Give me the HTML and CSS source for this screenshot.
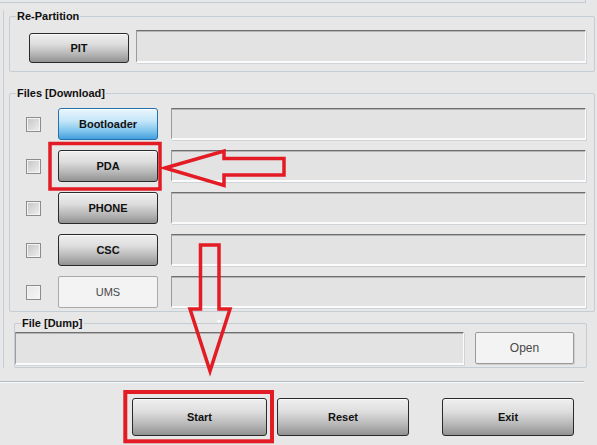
FILE: index.html
```html
<!DOCTYPE html>
<html>
<head>
<meta charset="utf-8">
<link rel="stylesheet" href="styles.css">
</head>
<body>
<div class="prev"></div>
<div class="panel">
  <fieldset class="group">
    <legend>Re-Partition</legend>
    <div class="rp-row">
      <button class="btn dark">PIT</button>
      <div class="field"></div>
    </div>
  </fieldset>
  <fieldset class="group files">
    <legend>Files [Download]</legend>
    <div class="rows">
      <div class="row"><span class="check"></span><button class="btn blue">Bootloader</button><div class="field"></div></div>
      <div class="row"><span class="check"></span><button class="btn dark">PDA</button><div class="field"></div></div>
      <div class="row"><span class="check"></span><button class="btn dark">PHONE</button><div class="field"></div></div>
      <div class="row"><span class="check"></span><button class="btn dark">CSC</button><div class="field"></div></div>
      <div class="row"><span class="check light"></span><button class="btn flat">UMS</button><div class="field"></div></div>
    </div>
  </fieldset>
  <fieldset class="group dump">
    <legend>File [Dump]</legend>
    <div class="dump-row">
      <div class="field"></div>
      <button class="btn flat open">Open</button>
    </div>
  </fieldset>
</div>
<div class="sep"></div>
<div class="actions">
  <button class="btn dark big">Start</button>
  <button class="btn dark big">Reset</button>
  <button class="btn dark big exit">Exit</button>
</div>
<svg class="marks" width="597" height="445" viewBox="0 0 597 445">
  <g fill="none" stroke="#e31b25" stroke-linejoin="miter">
    <rect x="50" y="143.5" width="110" height="45.5" stroke-width="3.5"/>
    <rect x="125.3" y="392" width="146.7" height="49.3" stroke-width="4"/>
    <polygon points="165,168 224,151 224,158.5 284,158.5 284,175 224,175 224,185.5" stroke-width="3.5"/>
    <polygon points="200.5,245 219,245 219,309 230,309 210,371 190,309 200.5,309" stroke-width="3.5"/>
  </g>
  <circle cx="219" cy="321" r="1.6" fill="#ffffff"/>
</svg>
</body>
</html>
```
FILE: styles.css
```css
html, body {
  margin: 0;
  padding: 0;
}
body {
  width: 597px;
  height: 445px;
  overflow: hidden;
  background: #e7e7e7;
  font-family: "Liberation Sans", Arial, sans-serif;
  font-size: 11px;
  color: #111;
  position: relative;
}
.prev {
  width: 585px;
  height: 2px;
  border-bottom: 1px solid #c3ccd4;
  border-right: 1px solid #c3ccd4;
}
.panel {
  margin: 7px 2px 0 3px;
  border-left: 1px solid #c6ced6;
  padding-left: 5px;
}
.group {
  margin: 0;
  padding: 0;
  min-width: 0;
  border: 1px solid #c4ccd4;
  border-radius: 2px;
}
.group legend {
  margin-left: 6px;
  padding: 0 1px;
  font-weight: bold;
  font-size: 11px;
  line-height: 12px;
  height: 12px;
}
.rp-row {
  display: flex;
  align-items: flex-end;
  gap: 7px;
  padding: 8px 8px 8px 19px;
}
.rp-row .field {
  height: 33px;
}
.files {
  margin-top: 15px;
}
.rows {
  display: flex;
  flex-direction: column;
  gap: 10px;
  padding: 9px 8px 3px 16px;
}
.row {
  display: flex;
  align-items: center;
  height: 32px;
}
.row .check {
  margin-right: 17px;
}
.row .btn {
  margin-right: 13px;
}
.row .field {
  height: 32px;
}
.dump {
  margin: 5px 8px 0 5px;
}
.dump-row {
  display: flex;
  align-items: flex-start;
  gap: 11px;
  padding: 3px 12px 2px 0;
}
.dump-row .field {
  height: 33px;
}
.field {
  flex: 1;
  box-sizing: border-box;
  background: #e3e3e3;
  border-top: 1px solid #6f6f6f;
  border-left: 1px solid #9c9c9c;
  border-right: 1px solid #fbfbfb;
  border-bottom: 2px solid #fbfbfb;
  box-shadow: inset 0 1px 0 #b4b4b4, 1px 1px 0 #cfd4d8;
}
.btn {
  flex: none;
  box-sizing: border-box;
  width: 100px;
  height: 32px;
  margin: 0;
  padding: 0;
  font-family: "Liberation Sans", Arial, sans-serif;
  font-size: 11px;
  font-weight: bold;
  color: #111;
  border-radius: 3px;
  text-align: center;
}
.rp-row .btn {
  height: 30px;
}
.dark {
  border: 1px solid #2a2a2a;
  background: linear-gradient(#efefef 0%, #dedede 35%, #b8b8b8 70%, #929292 100%);
  box-shadow: inset 0 1px 0 #fafafa;
}
.blue {
  border: 1px solid #2270ae;
  background: linear-gradient(#eaf6fd 0%, #c4e6f8 40%, #7cc2ec 75%, #449fdc 100%);
  box-shadow: inset 0 1px 0 #ffffff;
}
.flat {
  border: 1px solid #a9a9a9;
  border-radius: 2px;
  background: #f3f3f3;
  color: #474747;
  font-weight: normal;
}
.open {
  width: 99px;
  height: 32px;
  font-size: 12px;
  border-color: #9a9a9a;
  box-shadow: 1px 1px 0 #cfcfcf;
}
.check {
  flex: none;
  box-sizing: border-box;
  width: 15px;
  height: 15px;
  border: 1px solid #8c8c8c;
  background: linear-gradient(135deg, #c4c4c4 0%, #dedede 60%, #f0f0f0 100%);
  box-shadow: inset 0 0 0 1px #f4f4f4;
}
.check.light {
  background: linear-gradient(135deg, #e6e6e6 0%, #f7f7f7 100%);
}
.sep {
  width: 584px;
  margin-top: 13px;
  border-top: 1px solid #b3bbc2;
  border-bottom: 1px solid #fafafa;
}
.actions {
  display: flex;
  padding-left: 132px;
  margin-top: 15px;
  gap: 10px;
}
.big {
  height: 38px;
  width: 132px;
}
.big:first-child {
  width: 135px;
}
.exit {
  margin-left: 23px;
}
.marks {
  position: absolute;
  left: 0;
  top: 0;
  pointer-events: none;
}
```
